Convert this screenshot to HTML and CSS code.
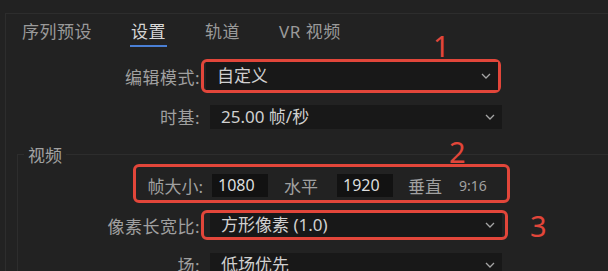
FILE: index.html
```html
<!DOCTYPE html>
<html lang="zh-CN">
<head>
    <meta charset="UTF-8">
    <title>新建序列 - 设置</title>
    <link rel="stylesheet" href="styles.css">
</head>
<body>
    <div class="panel">
        <div class="tabs">
            <div class="tab">序列预设</div>
            <div class="tab active">设置</div>
            <div class="tab">轨道</div>
            <div class="tab">VR 视频</div>
        </div>

        <div class="row row-mode">
            <div class="label">编辑模式:</div>
            <div class="mark mark-mode">
                <div class="select select-tall">自定义<svg class="chev" viewBox="0 0 10 6"><polyline points="1,1 5,5 9,1"/></svg></div>
            </div>
        </div>

        <div class="row row-base">
            <div class="label">时基:</div>
            <div class="select">25.00 帧/秒<svg class="chev" viewBox="0 0 10 6"><polyline points="1,1 5,5 9,1"/></svg></div>
        </div>

        <div class="group">
            <div class="group-title">视频</div>

            <div class="frame-box">
                <div class="frame-label">帧大小:</div>
                <div class="num">1080</div>
                <div class="unit unit-h">水平</div>
                <div class="num">1920</div>
                <div class="unit unit-v">垂直</div>
                <div class="ratio">9:16</div>
            </div>

            <div class="row row-pixel">
                <div class="label">像素长宽比:</div>
                <div class="mark mark-pixel">
                    <div class="select">方形像素 (1.0)<svg class="chev" viewBox="0 0 10 6"><polyline points="1,1 5,5 9,1"/></svg></div>
                </div>
            </div>

            <div class="row row-field">
                <div class="label">场:</div>
                <div class="select">低场优先<svg class="chev" viewBox="0 0 10 6"><polyline points="1,1 5,5 9,1"/></svg></div>
            </div>
        </div>
    </div>

    <div class="note note-1">1</div>
    <div class="note note-2">2</div>
    <div class="note note-3">3</div>
</body>
</html>
```

FILE: styles.css
```css
body {
    margin: 0;
    width: 608px;
    height: 271px;
    overflow: hidden;
    position: relative;
    background: #222222;
    font-family: "Noto Sans", "Noto Sans CJK SC", sans-serif;
    color: #a0a0a0;
    font-size: 17px;
}

.panel {
    margin: 13px 0 0 5px;
    border-top: 1px solid #2d2d2d;
    border-left: 1px solid #2d2d2d;
    height: 270px;
}

.tabs {
    display: flex;
    gap: 37px;
    padding: 6px 0 0 15px;
}

.tab {
    font-size: 17px;
    letter-spacing: 0.5px;
    line-height: 24px;
    padding: 0 1px 1px;
    border-bottom: 2px solid transparent;
    color: #9a9a9a;
}

.tab.active {
    color: #d6d6d6;
    border-bottom-color: #4a7fd4;
}

.row {
    display: flex;
    align-items: center;
}

.label {
    width: 194px;
    text-align: right;
    flex-shrink: 0;
    letter-spacing: 0.5px;
}

.group .label {
    width: 182px;
}

.select {
    position: relative;
    width: 292px;
    height: 24px;
    line-height: 24px;
    box-sizing: border-box;
    padding-left: 11px;
    background: #181818;
    color: #d0d0d0;
    margin-left: 10px;
}

.select-tall {
    height: 28px;
    line-height: 28px;
}

.chev {
    position: absolute;
    right: 7px;
    top: 50%;
    width: 10px;
    height: 6px;
    margin-top: -3px;
    fill: none;
    stroke: #a5a5a5;
    stroke-width: 1.3;
}

.mark {
    border: 3px solid #e2463a;
    border-radius: 6px;
}

.mark .select {
    margin-left: 0;
}

.row-mode {
    margin-top: 12px;
}

.mark-mode {
    margin-left: 1px;
    padding-left: 2px;
}

.row-base {
    margin-top: 11px;
}

.group {
    margin: 25px 0 0 11px;
    border-top: 1px solid #2d2d2d;
    border-left: 1px solid #2d2d2d;
}

.group-title {
    width: max-content;
    margin: -10px 0 -3px 6px;
    padding: 0 4px;
    line-height: 22px;
    font-size: 17px;
    background: #222222;
    color: #a2a2a2;
}

.frame-box {
    display: flex;
    align-items: center;
    box-sizing: border-box;
    margin-left: 115px;
    width: 377px;
    height: 39px;
    padding-top: 3px;
    border: 3px solid #e2463a;
    border-radius: 6px;
}

.frame-label {
    width: 67px;
    text-align: right;
}

.num {
    margin-left: 9px;
    width: 56px;
    height: 23px;
    line-height: 23px;
    box-sizing: border-box;
    padding-left: 6px;
    background: #121212;
    color: #dedede;
    font-size: 16px;
}

.unit-h {
    margin-left: 16px;
    margin-right: 10px;
}

.unit-v {
    margin-left: 15px;
}

.ratio {
    margin-left: 17px;
    font-size: 14px;
}

.row-pixel {
    margin-top: 7px;
}

.mark-pixel {
    margin-left: 1px;
    padding: 0 3px 0 6px;
}

.row-field {
    margin-top: 12px;
}

.note {
    position: absolute;
    font-size: 29px;
    line-height: 28px;
    color: #e2463a;
}

.note-1 {
    left: 433px;
    top: 32px;
}

.note-2 {
    left: 449px;
    top: 138px;
}

.note-3 {
    left: 530px;
    top: 212px;
}
```
